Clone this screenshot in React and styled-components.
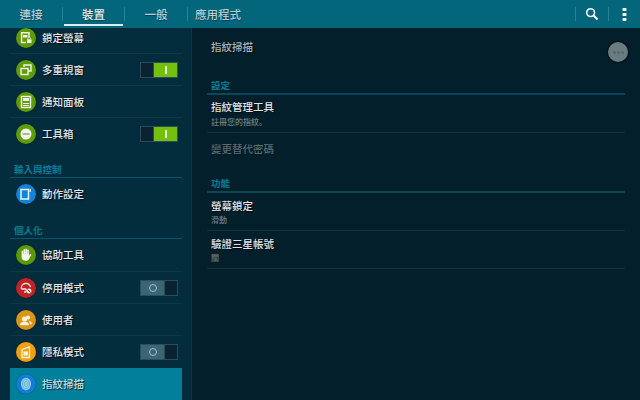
import styled, { createGlobalStyle } from "styled-components";

const GlobalStyle = createGlobalStyle`
  html, body {
    margin: 0;
    width: 640px;
    height: 400px;
    overflow: hidden;
    background: #021f2b;
    font-family: "Noto Sans CJK TC", "Noto Sans", sans-serif;
  }
`;

const Screen = styled.div`
  width: 640px;
  height: 400px;
  display: flex;
  flex-direction: column;
  overflow: hidden;
`;

const TopBar = styled.header`
  height: 28px;
  flex: none;
  display: flex;
  align-items: stretch;
  background: #04667b;
`;

const Tab = styled.div`
  position: relative;
  width: ${(p) => p.$width}px;
  display: flex;
  align-items: center;
  justify-content: center;
  font-size: 11.5px;
  line-height: 28px;
  color: ${(p) => (p.$active ? "#e4eef0" : "#b4ccd3")};
  font-weight: 500;
  text-shadow: 0 1px 1px rgba(0, 30, 40, 0.5);
  ${(p) =>
    p.$active &&
    `&::after {
      content: "";
      position: absolute;
      left: 1px;
      right: 1px;
      bottom: 2px;
      height: 2px;
      background: #dfeaec;
    }`}
`;

const BarDivider = styled.div`
  width: 1px;
  height: 14px;
  align-self: center;
  flex: none;
  background: #2a7f92;
`;

const BarActions = styled.div`
  margin-left: auto;
  display: flex;
  align-items: center;
`;

const BarButton = styled.div`
  width: ${(p) => p.$width}px;
  height: 28px;
  display: flex;
  align-items: center;
  justify-content: center;
`;

const Body = styled.div`
  flex: 1;
  min-height: 0;
  display: flex;
`;

const Sidebar = styled.aside`
  width: 192px;
  flex: none;
  box-sizing: border-box;
  padding: 0 9px 0 10px;
  background: #032c3d;
  border-right: 1px solid #0a3646;
  overflow: hidden;
`;

const SideList = styled.div`
  margin-top: -6px;
  display: flex;
  flex-direction: column;
`;

const SideRow = styled.div`
  height: ${(p) => p.$height || 32}px;
  flex: none;
  box-sizing: border-box;
  display: flex;
  align-items: center;
  padding: 0 4px 0 6px;
  gap: 6px;
  background: ${(p) => (p.$selected ? "#02809b" : "transparent")};
  border-bottom: 1px solid ${(p) => (p.$plain ? "transparent" : "#0b3a4b")};
`;

const IconDisc = styled.div`
  width: 20px;
  height: 20px;
  flex: none;
  border-radius: 50%;
  background: ${(p) => p.$color};
  display: flex;
  align-items: center;
  justify-content: center;
  box-shadow: 0 0 1px rgba(0, 0, 0, 0.6);
`;

const RowLabel = styled.span`
  font-size: 10.5px;
  line-height: 14px;
  font-weight: 500;
  color: ${(p) => (p.$selected ? "#c4dde3" : "#e2e6e8")};
  text-shadow: 1px 1px 1px rgba(0, 0, 0, 0.75);
  flex: 1;
`;

const SideSection = styled.div`
  box-sizing: border-box;
  height: ${(p) => p.$height}px;
  display: flex;
  align-items: flex-end;
  padding: 0 0 1px 4px;
  font-size: 9.5px;
  line-height: 13px;
  font-weight: 700;
  color: #067f99;
  border-bottom: 1px solid #07556b;
`;

const Switch = styled.div`
  width: 38px;
  height: 16px;
  box-sizing: border-box;
  flex: none;
  display: flex;
  padding: 1px;
  gap: 1px;
  background: #2c4c5a;
`;

const SwitchHalf = styled.div`
  display: flex;
  align-items: center;
  justify-content: center;
  flex: ${(p) => (p.$grow ? 1 : "none")};
  width: ${(p) => (p.$grow ? "auto" : "12px")};
  background: ${(p) => p.$bg};
`;

const OnMark = styled.div`
  width: 2px;
  height: 8px;
  background: #e4f8c8;
`;

const OffMark = styled.div`
  width: 8px;
  height: 8px;
  box-sizing: border-box;
  border-radius: 50%;
  border: 1.5px solid #9fc0cc;
`;

const Content = styled.main`
  position: relative;
  flex: 1;
  min-width: 0;
  box-sizing: border-box;
  padding: 12px 15px 0 15px;
  background: #021f2b;
`;

const PageTitle = styled.div`
  height: 14px;
  padding-left: 4px;
  font-size: 10.5px;
  line-height: 14px;
  font-weight: 500;
  color: #a9b4b9;
  text-shadow: 1px 1px 1px rgba(0, 0, 0, 0.6);
`;

const MoreButton = styled.div`
  position: absolute;
  top: 14px;
  right: 12px;
  width: 20px;
  height: 20px;
  border-radius: 50%;
  background: #6b7b82;
  display: flex;
  align-items: center;
  justify-content: center;
  gap: 1px;
  box-shadow: 0 0 1px 1px rgba(0, 0, 0, 0.5);
`;

const MoreDot = styled.i`
  width: 3px;
  height: 3px;
  border-radius: 50%;
  background: #56676e;
`;

const SectionHead = styled.div`
  box-sizing: border-box;
  height: ${(p) => p.$height}px;
  display: flex;
  align-items: flex-end;
  padding: 0 0 1px 4px;
  font-size: 9.5px;
  line-height: 13px;
  font-weight: 700;
  color: #067f99;
  border-bottom: 2px solid #074757;
`;

const PrefRow = styled.div`
  height: ${(p) => p.$height}px;
  box-sizing: border-box;
  padding: ${(p) => p.$top}px 0 0 4px;
  border-bottom: 1px solid ${(p) => (p.$plain ? "transparent" : "#0b3440")};
`;

const PrefTitle = styled.div`
  font-size: 10.5px;
  line-height: 14px;
  font-weight: 500;
  color: ${(p) => (p.$disabled ? "#5c686d" : "#e0e4e6")};
  text-shadow: 1px 1px 1px rgba(0, 0, 0, ${(p) => (p.$disabled ? 0.2 : 0.7)});
`;

const PrefNote = styled.div`
  margin-top: ${(p) => p.$gap || 1}px;
  font-family: "Noto Sans CJK SC", sans-serif;
  font-size: 8px;
  line-height: 11px;
  font-weight: 500;
  color: #6d8188;
`;

const Glyph = ({ children }) => (
  <svg width="14" height="14" viewBox="0 0 14 14" fill="none">
    {children}
  </svg>
);

const LockScreenIcon = () => (
  <Glyph>
    <path d="M10 6V1.7H2.6v9.8H7" stroke="#f0f5e6" strokeWidth="1.4" />
    <rect x="4" y="4" width="4.5" height="2.5" fill="#f0f5e6" />
    <rect x="8" y="8.3" width="4.5" height="3.7" fill="#f0f5e6" />
    <path d="M9 8.3V7.4a1.2 1.2 0 0 1 2.4 0v.9" stroke="#f0f5e6" strokeWidth="0.8" />
  </Glyph>
);

const MultiWindowIcon = () => (
  <Glyph>
    <path d="M5 4V2h7v6h-3" stroke="#f0f5e6" strokeWidth="1.4" />
    <rect x="2" y="5.5" width="7" height="6" stroke="#f0f5e6" strokeWidth="1.4" />
  </Glyph>
);

const PanelIcon = () => (
  <Glyph>
    <rect x="2.5" y="1.5" width="9" height="11" stroke="#f0f5e6" strokeWidth="1.4" />
    <rect x="4" y="3" width="6" height="3" fill="#f0f5e6" />
    <path d="M4 8.5h6M4 10.5h6" stroke="#f0f5e6" />
  </Glyph>
);

const ToolboxIcon = () => (
  <Glyph>
    <circle cx="7" cy="7" r="5.5" fill="#f0f5e6" />
    <rect x="3.5" y="6.2" width="7" height="1.6" fill="#9aa98a" />
  </Glyph>
);

const MotionIcon = () => (
  <Glyph>
    <rect x="2" y="2.5" width="7.5" height="9.5" stroke="#eef6fc" strokeWidth="1.5" />
    <path d="M11.5 2l-.5 3" stroke="#eef6fc" strokeWidth="1.3" />
  </Glyph>
);

const HandIcon = () => (
  <Glyph>
    <path
      d="M2.6 6.5V3.4a.8.8 0 0 1 1.6 0V6h.3V1.9a.8.8 0 0 1 1.6 0V6h.3V1.4a.8.8 0 0 1 1.6 0V6h.3V2.2a.8.8 0 0 1 1.6 0V8l1-1.7c.6-.7 1.7 0 1.2.9L10 11c-.6 1-1.4 1.9-2.9 1.9-2.6 0-4.5-1.3-4.5-3.6V6.5z"
      fill="#f4f8ea"
    />
  </Glyph>
);

const BlockIcon = () => (
  <Glyph>
    <path d="M2.5 8a4.5 4.5 0 0 1 9-2" stroke="#f6e6e6" strokeWidth="1.3" />
    <path d="M2.5 8h4c1 0 1 2.5 0 3H5" stroke="#f6e6e6" strokeWidth="1.3" />
    <circle cx="10" cy="10" r="2.5" fill="#f6e6e6" />
    <path d="M8.5 8.5l3 3" stroke="#c02226" />
  </Glyph>
);

const UsersIcon = () => (
  <Glyph>
    <circle cx="5.5" cy="6" r="2.6" fill="#fbf0d8" />
    <path d="M1 12.2c0-2.4 1.8-3.4 4.5-3.4s4.5 1 4.5 3.4z" fill="#fbf0d8" />
    <circle cx="9" cy="4.5" r="2.1" fill="#fbf0d8" />
    <path d="M10 8c1.6.3 3 1.2 3 3.2h-2" fill="#fbf0d8" />
  </Glyph>
);

const PrivateIcon = () => (
  <Glyph>
    <path d="M3 4.5L10.5 2v10.5H3z" stroke="#fdf3dc" strokeWidth="1.3" />
    <rect x="4.5" y="6.5" width="4.5" height="4" fill="#fdf3dc" />
  </Glyph>
);

const FingerprintIcon = () => (
  <Glyph>
    <ellipse cx="7" cy="7" rx="5" ry="6.2" fill="#9ccde8" />
    <ellipse cx="7" cy="7" rx="3.4" ry="4.6" stroke="#4d9dd4" strokeWidth="0.6" />
    <ellipse cx="7" cy="7" rx="1.7" ry="2.7" stroke="#4d9dd4" strokeWidth="0.6" />
  </Glyph>
);

const Toggle = ({ on }) =>
  on ? (
    <Switch>
      <SwitchHalf $bg="#0a2231" />
      <SwitchHalf $bg="#74c00e" $grow>
        <OnMark />
      </SwitchHalf>
    </Switch>
  ) : (
    <Switch>
      <SwitchHalf $bg="#3b6475" $grow>
        <OffMark />
      </SwitchHalf>
      <SwitchHalf $bg="#0a2231" />
    </Switch>
  );

const Row = ({ icon, color, label, toggle, selected, plain, height }) => (
  <SideRow $selected={selected} $plain={plain} $height={height}>
    <IconDisc $color={color}>{icon}</IconDisc>
    <RowLabel $selected={selected}>{label}</RowLabel>
    {toggle && <Toggle on={toggle === "on"} />}
  </SideRow>
);

export default function App() {
  return (
    <Screen>
      <GlobalStyle />
      <TopBar>
        <Tab $width={62}>連接</Tab>
        <BarDivider />
        <Tab $width={61} $active>裝置</Tab>
        <BarDivider />
        <Tab $width={62}>一般</Tab>
        <BarDivider />
        <Tab $width={60}>應用程式</Tab>
        <BarActions>
          <BarDivider />
          <BarButton $width={32}>
            <svg width="14" height="14" viewBox="0 0 15 15" fill="none">
              <circle cx="6" cy="6" r="4.2" stroke="#f2f7f8" strokeWidth="1.7" />
              <path d="M9.2 9.2L13.4 13.4" stroke="#f2f7f8" strokeWidth="2.2" />
            </svg>
          </BarButton>
          <BarDivider />
          <BarButton $width={31}>
            <svg width="5" height="13" viewBox="0 0 5 13" fill="#f2f7f8">
              <rect x="0.5" y="0" width="4" height="3" rx="0.8" />
              <rect x="0.5" y="5" width="4" height="3" rx="0.8" />
              <rect x="0.5" y="10" width="4" height="3" rx="0.8" />
            </svg>
          </BarButton>
        </BarActions>
      </TopBar>
      <Body>
        <Sidebar>
          <SideList>
            <Row icon={<LockScreenIcon />} color="#5f9c0c" label="鎖定螢幕" />
            <Row icon={<MultiWindowIcon />} color="#5f9c0c" label="多重視窗" toggle="on" />
            <Row icon={<PanelIcon />} color="#5f9c0c" label="通知面板" />
            <Row icon={<ToolboxIcon />} color="#5f9c0c" label="工具箱" toggle="on" plain />
            <SideSection $height={28}>輸入與控制</SideSection>
            <Row icon={<MotionIcon />} color="#1283d6" label="動作設定" plain />
            <SideSection $height={29}>個人化</SideSection>
            <Row icon={<HandIcon />} color="#5a9a08" label="協助工具" height={33} />
            <Row icon={<BlockIcon />} color="#c02226" label="停用模式" toggle="off" />
            <Row icon={<UsersIcon />} color="#d9951c" label="使用者" />
            <Row icon={<PrivateIcon />} color="#f0a012" label="隱私模式" toggle="off" plain />
            <Row icon={<FingerprintIcon />} color="#0f7fd6" label="指紋掃描" selected plain />
          </SideList>
        </Sidebar>
        <Content>
          <PageTitle>指紋掃描</PageTitle>
          <MoreButton>
            <MoreDot />
            <MoreDot />
            <MoreDot />
          </MoreButton>
          <SectionHead $height={41}>設定</SectionHead>
          <PrefRow $height={38} $top={5}>
            <PrefTitle>指紋管理工具</PrefTitle>
            <PrefNote $gap={2}>註冊您的指紋。</PrefNote>
          </PrefRow>
          <PrefRow $height={32} $top={9} $plain>
            <PrefTitle $disabled>變更替代密碼</PrefTitle>
          </PrefRow>
          <SectionHead $height={28}>功能</SectionHead>
          <PrefRow $height={38} $top={6}>
            <PrefTitle>螢幕鎖定</PrefTitle>
            <PrefNote>滑動</PrefNote>
          </PrefRow>
          <PrefRow $height={38} $top={6}>
            <PrefTitle>驗證三星帳號</PrefTitle>
            <PrefNote>關</PrefNote>
          </PrefRow>
        </Content>
      </Body>
    </Screen>
  );
}
